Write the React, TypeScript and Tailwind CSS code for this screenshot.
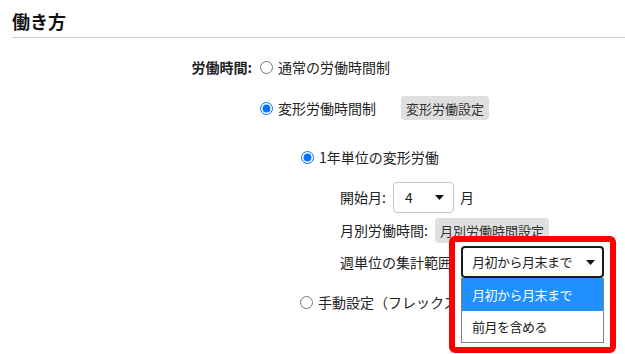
import { useState } from 'react';

const font = { fontFamily: '"Noto Sans CJK JP", "Noto Sans", sans-serif' };

const Caret = () => (
  <svg width="9" height="5" viewBox="0 0 9 5" className="shrink-0">
    <path d="M0 0 L9 0 L4.5 5 Z" fill="#111" />
  </svg>
);

const Radio = ({ checked }: { checked?: boolean }) => (
  <input
    type="radio"
    readOnly
    checked={!!checked}
    className="m-0 w-[13px] h-[13px] accent-[#0075ff] shrink-0"
  />
);

const GrayButton = ({ children }: { children: string }) => (
  <button className="h-[25px] px-[5px] rounded-[4px] bg-[#dfdfdf] text-[13px] text-[#333] leading-none">
    {children}
  </button>
);

export default function App() {
  const [mode] = useState('henkei');
  const options = ['月初から月末まで', '前月を含める'];

  return (
    <div className="w-[625px] h-[354px] bg-white text-[#222] text-[14px] overflow-hidden" style={font}>
      <div className="ml-3 pt-[8px] pb-[3px] border-b border-[#cccccc]">
        <h2 className="text-[18px] font-bold leading-[26px] text-[#111]">働き方</h2>
      </div>

      <div className="grid grid-cols-[252px_1fr] gap-x-[8px] mt-[17px]">
        <div className="h-6 flex items-center justify-end font-bold">労働時間:</div>
        <label className="h-6 flex items-center gap-[5px]">
          <Radio checked={mode === 'normal'} />
          <span>通常の労働時間制</span>
        </label>

        <div />
        <div className="mt-[17px] h-6 flex items-center">
          <label className="flex items-center gap-[5px]">
            <Radio checked={mode === 'henkei'} />
            <span>変形労働時間制</span>
          </label>
          <div className="ml-[25px]">
            <button className="h-6 px-[5px] rounded-[4px] bg-[#dfdfdf] text-[13px] text-[#333] leading-none">
              変形労働設定
            </button>
          </div>
        </div>

        <div />
        <div className="pl-[41px]">
          <label className="mt-[25px] h-6 flex items-center gap-[5px]">
            <Radio checked />
            <span>1年単位の変形労働</span>
          </label>

          <div className="pl-[39px]">
            <div className="mt-[13px] h-[31px] flex items-center">
              <span>開始月:</span>
              <div className="ml-[7px] w-[61px] h-[31px] border border-[#c4c4c4] rounded-[4px] flex items-center justify-between pl-[11px] pr-[9px]">
                <span>4</span>
                <Caret />
              </div>
              <span className="ml-[6px]">月</span>
            </div>

            <div className="mt-[5px] h-[25px] flex items-center">
              <span>月別労働時間:</span>
              <div className="ml-[7px]">
                <GrayButton>月別労働時間設定</GrayButton>
              </div>
            </div>

            <div className="mt-[3px] h-[32px] flex items-center">
              <span>週単位の集計範囲:</span>
              <div className="relative ml-[5px] w-[143px] h-[32px]">
                <div className="absolute left-[-12px] top-[-10px] w-[167px] h-[117px] z-10 bg-white border-[6px] border-[#ff0000] rounded-[6px] pl-[6px] pt-[4px] text-[13px] tracking-[-0.5px]">
                  <div className="w-[143px] h-[32px] border-2 border-[#1a1a1a] rounded-[4px] flex items-center justify-between pl-[9px] pr-[7px]">
                    <span>{options[0]}</span>
                    <Caret />
                  </div>
                  <ul className="w-[143px] h-[65px] border border-[#808080] border-t-0">
                    {options.map((o, i) => (
                      <li
                        key={o}
                        className={`flex items-center pl-[10px] ${i === 0 ? 'h-[33px] bg-[#1e90ff] text-white' : 'h-[31px] text-[#222]'}`}
                      >
                        {o}
                      </li>
                    ))}
                  </ul>
                </div>
              </div>
            </div>
          </div>

          <label className="mt-[12px] h-6 flex items-center gap-[5px] -ml-px">
            <Radio />
            <span className="whitespace-nowrap">手動設定（フレックスその他）</span>
          </label>
        </div>
      </div>
    </div>
  );
}
